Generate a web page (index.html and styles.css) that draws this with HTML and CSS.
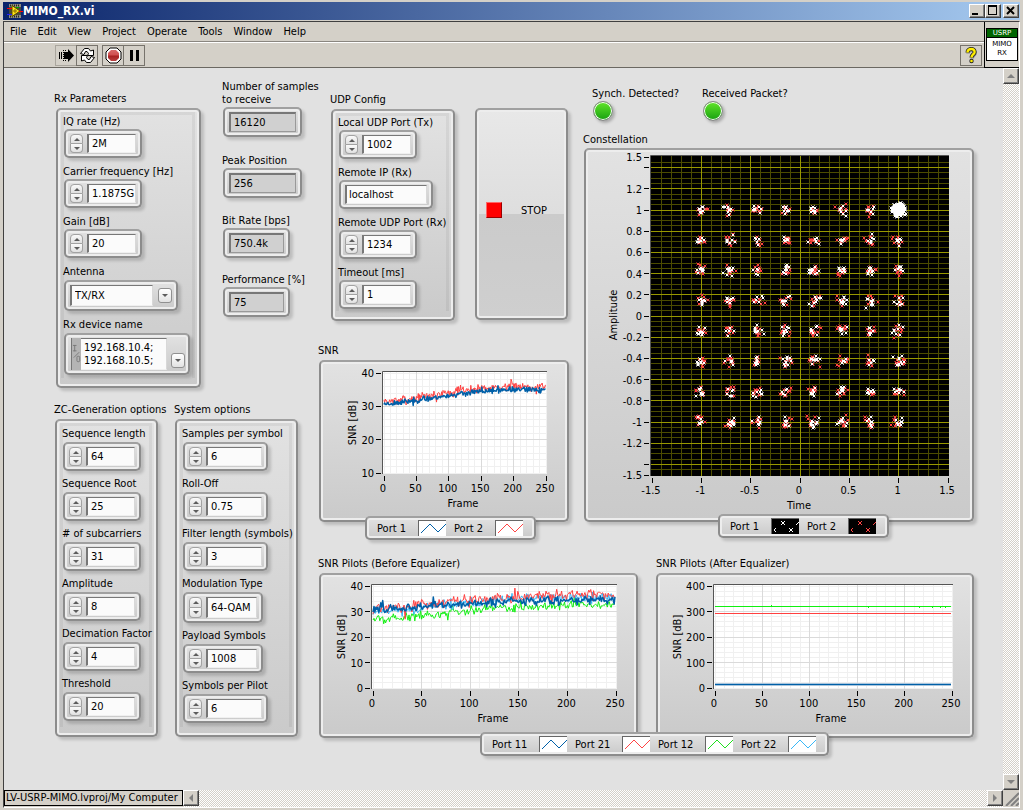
FILE: index.html
```html
<!DOCTYPE html>
<html lang="en">
<head>
<meta charset="utf-8">
<title>MIMO_RX.vi</title>
<link rel="stylesheet" href="styles.css">
</head>
<body>
<div class="window">
  <header class="titlebar">
    <svg class="app-icon" width="16" height="16" viewBox="0 0 16 16" aria-hidden="true">
      <rect x="2" y="1" width="12" height="14" fill="#8d8d80"/>
      <path d="M3 2.500h10M3 13.500h10" stroke="#26261f" stroke-width="2" stroke-dasharray="1 1"/>
      <rect x="2" y="4" width="12" height="8" fill="#4a4a3c"/>
      <path d="M5 2.500l8 5.500l-8 5.500z" fill="#ffe81a" stroke="#5a4c00"/>
      <path d="M6 8h4M8 6v4" stroke="#8a6a00"/>
      <path d="M0 5.500h5M12 8.500h4" stroke="#f00"/>
      <path d="M0 11.500h5" stroke="#22f"/>
      <path d="M9 4.500h3" stroke="#0a0"/>
    </svg>
    <h1 class="title">MIMO_RX.vi</h1>
    <div class="window-buttons">
      <button class="win-btn" aria-label="Minimize"><svg width="12" height="10" shape-rendering="crispEdges"><path d="M2 9h6" stroke="#000" stroke-width="2"/></svg></button>
      <button class="win-btn" aria-label="Maximize"><svg width="12" height="10" shape-rendering="crispEdges"><path d="M2.500 1v8.500h8v-9" fill="none" stroke="#000"/><path d="M2 1h9" stroke="#000" stroke-width="2"/></svg></button>
      <button class="win-btn close" aria-label="Close"><svg width="12" height="10"><path d="M3 2l7 7M10 2l-7 7" stroke="#000" stroke-width="2"/></svg></button>
    </div>
  </header>

  <div class="client">
    <div class="bars">
      <div class="bars-main">
        <nav class="menubar">
          <button>File</button><button>Edit</button><button>View</button><button>Project</button><button>Operate</button><button>Tools</button><button>Window</button><button>Help</button>
        </nav>
        <div class="toolbar">
          <div class="tool-set">
            <button class="tool flat" aria-label="Run"><svg width="17" height="17" viewBox="0 0 17 17"><path d="M6 5h4V2l6 6.500l-6 6.500v-3H6z" fill="#000"/><path d="M1.500 5v7M3.500 5v7" stroke="#000"/><path d="M5.500 3v11" stroke="#000" stroke-dasharray="1 1"/><path d="M7 3.500h2M7 13.500h2" stroke="#000" stroke-dasharray="1 1"/></svg></button>
            <button class="tool" aria-label="Run continuously"><svg width="17" height="17" viewBox="0 0 17 17" fill="#fff" stroke="#000"><path d="M1.500 6.500L5.500 1.500H9.500L11.500 4L14.500 3V8.500H8.500L9.500 6.500L8 4.500H6.500L5 7.500z"/><path d="M15.500 10.500L11.500 15.500H7.500L5.500 13L2.500 14V8.500H8.500L7.500 10.500L9 12.500H10.500L12 9.500z"/></svg></button>
          </div>
          <div class="tool-set">
            <button class="tool" aria-label="Abort"><svg width="17" height="17" viewBox="0 0 17 17"><defs><linearGradient id="abortFill" x1="0" y1="0" x2="0" y2="1"><stop offset="0" stop-color="#d86a6a"/><stop offset=".45" stop-color="#d05050"/><stop offset=".55" stop-color="#a82222"/><stop offset="1" stop-color="#b84040"/></linearGradient></defs><path d="M5 1h7l4 4v7l-4 4H5l-4-4V5z" fill="#fff" stroke="#000"/><path d="M6 3h5l3 3v5l-3 3H6l-3-3V6z" fill="url(#abortFill)"/></svg></button>
            <button class="tool" aria-label="Pause"><svg width="17" height="17" viewBox="0 0 17 17" fill="#000"><path d="M4 3h3v11H4zM10 3h3v11h-3z"/></svg></button>
          </div>
          <button class="tool help" aria-label="Context help"><svg width="17" height="17" viewBox="0 0 17 17" fill="none"><path d="M5 6.500c0-5 8-4.500 7 0c-.5 2-3 2-3 5" stroke="#888" stroke-width="3.500"/><path d="M4.500 5.500c0-5 8-4.500 7 0c-.5 2-3 2-3 5" stroke="#222" stroke-width="4"/><circle cx="8.500" cy="14" r="2.200" fill="#222"/><path d="M4.500 5.500c0-5 8-4.500 7 0c-.5 2-3 2-3 5" stroke="#ffee00" stroke-width="2.500"/><circle cx="8.500" cy="14" r="1.300" fill="#ffee00"/></svg></button>
        </div>
      </div>
      <div class="vi-icon-pane">
        <div class="vi-icon"><strong>USRP</strong><span>MIMO</span><span>RX</span></div>
      </div>
    </div>

    <main class="panel">
      <section class="params">
        <div class="row row-top">
          <section class="cluster">
            <h2>Rx Parameters</h2>
            <div class="group">
              <div class="item"><label for="iq">IQ rate (Hz)</label><div class="ctl"><span class="spin"><button aria-label="Increase"></button><button aria-label="Decrease"></button></span><input id="iq" value="2M"></div></div>
              <div class="item"><label for="cf">Carrier frequency [Hz]</label><div class="ctl"><span class="spin"><button aria-label="Increase"></button><button aria-label="Decrease"></button></span><input id="cf" value="1.1875G"></div></div>
              <div class="item"><label for="gain">Gain [dB]</label><div class="ctl"><span class="spin"><button aria-label="Increase"></button><button aria-label="Decrease"></button></span><input id="gain" value="20"></div></div>
              <div class="item"><label for="ant">Antenna</label><div class="ctl tall select"><select id="ant"><option>TX/RX</option></select><span class="drop"></span></div></div>
              <div class="item"><label for="dev">Rx device name</label><div class="ctl tall device"><span class="io"><svg width="10" height="22" viewBox="0 0 10 22" fill="none" stroke="#777"><path d="M1 1.500h4M3 1v7M1 7.500h4M2 15l6-6"/><rect x="5.500" y="13.500" width="3" height="6" rx="1"/></svg></span><textarea id="dev" rows="2">192.168.10.4;
192.168.10.5;</textarea><button class="drop" aria-label="Choose device"></button></div></div>
            </div>
          </section>
          <section class="readouts">
            <div class="item"><label for="ns">Number of samples<br>to receive</label><div class="ctl out"><input id="ns" readonly value="16120"></div></div>
            <div class="item"><label for="pp">Peak Position</label><div class="ctl out"><input id="pp" readonly value="256"></div></div>
            <div class="item"><label for="br">Bit Rate [bps]</label><div class="ctl out small"><input id="br" readonly value="750.4k"></div></div>
            <div class="item"><label for="pf">Performance [%]</label><div class="ctl out small"><input id="pf" readonly value="75"></div></div>
          </section>
        </div>
        <div class="row row-bottom">
          <section class="cluster">
            <h2>ZC-Generation options</h2>
            <div class="group zc">
              <div class="item"><label for="sl">Sequence length</label><div class="ctl"><span class="spin"><button aria-label="Increase"></button><button aria-label="Decrease"></button></span><input id="sl" value="64"></div></div>
              <div class="item"><label for="sr">Sequence Root</label><div class="ctl"><span class="spin"><button aria-label="Increase"></button><button aria-label="Decrease"></button></span><input id="sr" value="25"></div></div>
              <div class="item"><label for="sc"># of subcarriers</label><div class="ctl"><span class="spin"><button aria-label="Increase"></button><button aria-label="Decrease"></button></span><input id="sc" value="31"></div></div>
              <div class="item"><label for="am">Amplitude</label><div class="ctl"><span class="spin"><button aria-label="Increase"></button><button aria-label="Decrease"></button></span><input id="am" value="8"></div></div>
              <div class="item"><label for="df">Decimation Factor</label><div class="ctl"><span class="spin"><button aria-label="Increase"></button><button aria-label="Decrease"></button></span><input id="df" value="4"></div></div>
              <div class="item"><label for="th">Threshold</label><div class="ctl"><span class="spin"><button aria-label="Increase"></button><button aria-label="Decrease"></button></span><input id="th" value="20"></div></div>
            </div>
          </section>
          <section class="cluster">
            <h2>System options</h2>
            <div class="group sys">
              <div class="item"><label for="sps">Samples per symbol</label><div class="ctl wide"><span class="spin"><button aria-label="Increase"></button><button aria-label="Decrease"></button></span><input id="sps" value="6"></div></div>
              <div class="item"><label for="ro">Roll-Off</label><div class="ctl wide"><span class="spin"><button aria-label="Increase"></button><button aria-label="Decrease"></button></span><input id="ro" value="0.75"></div></div>
              <div class="item"><label for="fl">Filter length (symbols)</label><div class="ctl wide"><span class="spin"><button aria-label="Increase"></button><button aria-label="Decrease"></button></span><input id="fl" value="3"></div></div>
              <div class="item"><label for="mt">Modulation Type</label><div class="ctl ring"><span class="spin"><button aria-label="Increase"></button><button aria-label="Decrease"></button></span><input id="mt" value="64-QAM"></div></div>
              <div class="item"><label for="ps">Payload Symbols</label><div class="ctl mid"><span class="spin"><button aria-label="Increase"></button><button aria-label="Decrease"></button></span><input id="ps" value="1008"></div></div>
              <div class="item"><label for="spp">Symbols per Pilot</label><div class="ctl wide"><span class="spin"><button aria-label="Increase"></button><button aria-label="Decrease"></button></span><input id="spp" value="6"></div></div>
            </div>
          </section>
        </div>
      </section>

      <section class="displays">
        <div class="upper">
          <div class="middle">
            <div class="udp-row">
              <section class="cluster">
                <h2>UDP Config</h2>
                <div class="group udp">
                  <div class="item"><label for="lp">Local UDP Port (Tx)</label><div class="ctl"><span class="spin"><button aria-label="Increase"></button><button aria-label="Decrease"></button></span><input id="lp" value="1002"></div></div>
                  <div class="item"><label for="ip">Remote IP (Rx)</label><div class="ctl text"><input id="ip" value="localhost"></div></div>
                  <div class="item"><label for="rp">Remote UDP Port (Rx)</label><div class="ctl"><span class="spin"><button aria-label="Increase"></button><button aria-label="Decrease"></button></span><input id="rp" value="1234"></div></div>
                  <div class="item"><label for="to">Timeout [ms]</label><div class="ctl"><span class="spin"><button aria-label="Increase"></button><button aria-label="Decrease"></button></span><input id="to" value="1"></div></div>
                </div>
              </section>
              <button class="stop"><span class="stop-mark"></span>STOP</button>
            </div>
            <figure class="graph">
              <figcaption>SNR</figcaption>
              <div class="frame">
                <svg id="snr" viewBox="0 0 246 158"></svg>
                <ul class="legend snr-legend">
                  <li>Port 1<svg class="swatch" width="28" height="16"><path d="M2 12l9-9l8 8l8-8" stroke="#0060a8"/></svg></li>
                  <li>Port 2<svg class="swatch" width="28" height="16"><path d="M2 12l9-9l8 8l8-8" stroke="#f44"/></svg></li>
                </ul>
              </div>
            </figure>
          </div>
          <div class="right">
            <div class="leds">
              <div class="led-item"><span>Synch. Detected?</span><i class="led"></i></div>
              <div class="led-item"><span>Received Packet?</span><i class="led"></i></div>
            </div>
            <figure class="graph">
              <figcaption>Constellation</figcaption>
              <div class="frame">
                <svg id="constellation" viewBox="0 0 386 370"></svg>
                <ul class="legend const-legend">
                  <li>Port 1<svg class="swatch dark" width="28" height="16"><path d="M9 2l4 4m0-4l-4 4M17 9l4 4m0-4l-4 4M4 9l-2 2l2 2M24 6l3-3" stroke="#fff"/></svg></li>
                  <li>Port 2<svg class="swatch dark" width="28" height="16"><path d="M9 2l4 4m0-4l-4 4M17 9l4 4m0-4l-4 4M4 9l-2 2l2 2M24 6l3-3" stroke="#f44"/></svg></li>
                </ul>
              </div>
            </figure>
          </div>
        </div>
        <div class="pilots">
          <figure class="graph">
            <figcaption>SNR Pilots (Before Equalizer)</figcaption>
            <div class="frame"><svg id="before" viewBox="0 0 315 161"></svg></div>
          </figure>
          <figure class="graph flush">
            <figcaption>SNR Pilots (After Equalizer)</figcaption>
            <div class="frame"><svg id="after" viewBox="0 0 314 161"></svg></div>
          </figure>
          <ul class="legend pilot-legend">
            <li>Port 11<svg class="swatch" width="28" height="16"><path d="M2 12l9-9l8 8l8-8" stroke="#0060a8"/></svg></li>
            <li>Port 21<svg class="swatch" width="28" height="16"><path d="M2 12l9-9l8 8l8-8" stroke="#f44"/></svg></li>
            <li>Port 12<svg class="swatch" width="28" height="16"><path d="M2 12l9-9l8 8l8-8" stroke="#1fe01f"/></svg></li>
            <li>Port 22<svg class="swatch" width="28" height="16"><path d="M2 12l9-9l8 8l8-8" stroke="#38b8f8"/></svg></li>
          </ul>
        </div>
      </section>
    </main>

    <div class="vscroll"><button class="sb up" aria-label="Scroll up"></button><button class="sb down" aria-label="Scroll down"></button></div>
    <div class="hscroll"><span class="context">LV-USRP-MIMO.lvproj/My Computer</span><div class="htrack"><button class="sb left" aria-label="Scroll left"></button><button class="sb right-arrow" aria-label="Scroll right"></button></div></div>
    <svg class="grip" width="16" height="16" stroke="#808080" stroke-width="2"><path d="M3 16L16 3M8 16L16 8M13 16L16 13"/></svg>
  </div>
</div>
<script src="charts.js"></script>
</body>
</html>
```

FILE: styles.css
```css
* { box-sizing: border-box; }

body, button, input, select, textarea {
  font-family: "DejaVu Sans Condensed", "DejaVu Sans", "Noto Sans", sans-serif;
  font-size: 11px;
  color: #000;
}
body { margin: 0; background: #d4d0c8; }
button { padding: 0; margin: 0; }
h1, h2, figure, ul { margin: 0; padding: 0; }
h2, figcaption { font-size: 11px; font-weight: normal; line-height: 15px; white-space: nowrap; }

.window {
  display: flex;
  flex-direction: column;
  min-height: 100vh;
  padding: 2px 3px 2px 3px;
}

/* title bar */
.titlebar {
  display: flex;
  align-items: center;
  height: 18px;
  padding: 0 1px 0 4px;
  background: linear-gradient(90deg, #0a246a, #a6caf0);
}
.title { flex: 1; color: #fff; font-size: 12px; font-weight: bold; line-height: 18px; }
.window-buttons { display: flex; }
.win-btn {
  display: flex;
  width: 16px;
  height: 14px;
  background: #d4d0c8;
  border: 1px solid;
  border-color: #fff #404040 #404040 #fff;
  box-shadow: inset -1px -1px 0 #808080;
}
.win-btn.close { margin-left: 2px; }

.client {
  flex: 1;
  display: grid;
  grid-template-columns: 1fr 16px;
  grid-template-rows: auto 1fr 17px;
  margin-top: 1px;
  border: 1px solid #404040;
  border-right-color: #fff;
  border-bottom-color: #fff;
}

/* menu and tool bars */
.bars { grid-column: 1 / 3; display: flex; height: 46px; }
.bars-main { flex: 1; }
.menubar {
  display: flex;
  gap: 1px;
  height: 20px;
  padding-left: 1px;
  border-bottom: 1px solid #8a8680;
}
.menubar button { padding: 0 5px; border: 0; background: none; font-size: 11px; line-height: 19px; }
.toolbar {
  display: flex;
  gap: 5px;
  height: 26px;
  padding: 2px 2px 0 51px;
  border-top: 1px solid #fff;
  border-bottom: 1px solid #6b6862;
}
.tool-set { display: flex; }
.tool {
  display: grid;
  place-items: center;
  width: 22px;
  height: 21px;
  margin-right: -1px;
  background: #d4d0c8;
  border: 1px solid #77736c;
}
.tool.flat { border-color: #aaa69e; }
.tool.help { margin: 0 0 0 auto; }
.vi-icon-pane {
  width: 35px;
  padding: 6px 1px 0;
  border-left: 1px solid #000;
  border-bottom: 1px solid #000;
}
.vi-icon {
  display: flex;
  flex-direction: column;
  align-items: center;
  height: 33px;
  width: 32px;
  background: #fff;
  border: 1px solid #000;
  font: 7px/9px "DejaVu Sans", sans-serif;
}
.vi-icon strong {
  width: 100%;
  margin-bottom: 2px;
  background: #006400;
  border-bottom: 1px solid #000;
  color: #fff;
  font-weight: normal;
  line-height: 8px;
  text-align: center;
}

/* front panel */
.panel {
  display: flex;
  padding: 12px 29px 34px 50px;
  background: #e1e1e1;
}
.params { width: 264px; flex: none; }
.row { display: flex; align-items: flex-start; }
.row-top { gap: 21px; height: 322px; }
.row-bottom { gap: 16px; }
.row-top > .cluster { padding-top: 11px; }

.group, .frame, .ctl, .stop, .legend {
  border: 2px solid #8c8c8c;
  border-top-color: #a0a0a0;
  border-radius: 5px;
  background: linear-gradient(#e2e2e2, #cacaca);
  box-shadow: inset 0 0 0 2px #ededed, 3px 3px 3px rgba(0, 0, 0, .16);
}
.group {
  position: relative;
  display: flex;
  flex-direction: column;
  gap: 6px;
  width: 145px;
  margin: 2px 0 0 2px;
  padding: 4px 0 11px 5px;
}
.group::before {
  content: "";
  position: absolute;
  inset: 2px 4px 8px 3px;
  border: 3px solid rgba(0, 0, 0, .05);
  border-bottom: 0;
}
.row-bottom .group { gap: 5px; margin-left: 1px; padding-top: 5px; }
.row-bottom .ctl { margin-top: 1px; }
.group.zc { width: 103px; padding-bottom: 14px; }
.row-bottom .cluster:first-child { width: 104px; }
.group.sys { width: 123px; padding-bottom: 12px; }
.group.udp { width: 124px; padding-bottom: 10px; margin-left: 1px; }
.item { position: relative; }
.item label { display: block; line-height: 15px; white-space: nowrap; }

.ctl {
  display: flex;
  align-items: stretch;
  gap: 4px;
  width: 78px;
  height: 29px;
  margin-left: 1px;
  padding: 3px 4px;
}
.ctl.tall, .ctl.ring { height: 31px; }
.ctl.tall { margin-top: 1px; }
.ctl.wide { width: 85px; }
.ctl.ring, .ctl.mid { width: 80px; }
.ctl.text { width: 94px; }
.ctl.select { width: 114px; gap: 5px; align-items: center; }
.ctl.device { width: 126px; height: 42px; gap: 0; padding: 3px 3px 3px 5px; }
.ctl.out { width: 79px; height: 30px; }
.ctl.out.small { width: 67px; }

.ctl input, .ctl select, .ctl textarea {
  flex: 1;
  min-width: 0;
  width: 0;
  margin: 0;
  padding: 0 0 0 3px;
  border: 2px solid;
  border-color: #777 #d8d8d8 #f0f0f0 #777;
  border-width: 1px 1px 1px 2px;
  border-radius: 0;
  background: #fbfbfb;
  outline: 0;
}
.ctl.text input { padding-left: 2px; }
.ctl.out input { background: #d0d0d0; border-color: #777 #999 #999 #777; border-width: 2px 1px 1px 2px; }
.ctl.select select { height: 21px; appearance: none; }
.ctl.device textarea {
  border-left-width: 0;
  line-height: 13px;
  padding: 2px 2px 2px 3px;
  resize: none;
  overflow: hidden;
}
.io { display: flex; align-items: center; width: 10px; background: #b4b4b4; border-left: 1px solid #777; }

.spin { display: flex; flex-direction: column; width: 13px; }
.spin button {
  flex: 1;
  display: grid;
  place-items: center;
  border: 1px solid #a2a2a2;
  background: linear-gradient(#fafafa, #e0e0e0);
}
.spin button:first-child { border-radius: 4px 4px 0 0; }
.spin button:last-child { border-radius: 0 0 4px 4px; border-top: 0; }
.spin button::before, .drop::before {
  content: "";
  border: 3px solid transparent;
  border-top: 0;
  border-bottom: 3px solid #5c5c5c;
}
.spin button:last-child::before, .drop::before { border-top: 3px solid #5c5c5c; border-bottom: 0; }
.drop {
  display: grid;
  place-items: center;
  width: 14px;
  height: 15px;
  border: 1px solid #909090;
  border-radius: 3px;
  background: linear-gradient(#fff, #e2e2e2);
}
.device .drop { margin: 15px 0 0 4px; }

.readouts .item { height: 59px; }
.readouts .item:first-child { height: 73px; }
.readouts .item:first-child label { line-height: 13px; padding-bottom: 1px; }
.readouts .item:nth-child(2) { height: 60px; }

/* graphs */
.displays { flex: 1; min-width: 0; }
.upper { display: grid; grid-template-columns: 251fr 391fr; gap: 14px; align-items: end; }
.udp-row { display: flex; gap: 20px; padding: 12px 1px 0 12px; margin-bottom: 22px; }
.stop {
  display: flex;
  align-items: center;
  gap: 19px;
  flex: 1;
  height: 212px;
  margin-top: 16px;
  padding: 0 0 8px 9px;
  background: linear-gradient(#e8e8e8, #dedede 50%, #cbcbcb 50%, #cfcfcf);
}
.stop-mark { width: 16px; height: 16px; background: #f00; border: 1px solid; border-color: #f66 #900 #900 #f66; }
.frame { position: relative; margin: 2px 0 0 1px; }
.flush .frame { margin-left: 0; }
.right .frame { margin-top: 1px; }
.frame > svg { display: block; width: 100%; height: auto; }
.frame text { font-size: 11px; }
.leds { display: flex; gap: 24px; padding-left: 9px; margin-bottom: 11px; }
.led-item { display: flex; flex-direction: column; line-height: 15px; width: 86px; white-space: nowrap; }
.led {
  width: 20px;
  height: 20px;
  margin-left: 1px;
  border: 1px solid #888;
  border-radius: 50%;
  background: linear-gradient(#62e62a, #18a010);
  box-shadow: inset 0 0 0 1px #fff, 2px 2px 3px rgba(0, 0, 0, .25);
}
.legend {
  position: absolute;
  display: flex;
  gap: 8px;
  height: 24px;
  padding: 0 11px 0 10px;
  list-style: none;
}
.legend li { display: flex; align-items: center; justify-content: space-between; width: 69px; white-space: nowrap; }
.pilot-legend li { width: 75px; }
.snr-legend { left: 44px; bottom: -20px; }
.const-legend { left: 132px; bottom: -18px; }
.pilot-legend { left: 162px; bottom: -18px; }
.swatch { background: #fff; border: 1px solid #666; border-right: 0; border-bottom: 0; fill: none; }
.swatch.dark { background: #000; }
.pilots { position: relative; display: grid; grid-template-columns: 320fr 318fr; gap: 18px; margin-top: 34px; }

/* scroll bars */
.vscroll, .htrack {
  display: flex;
  justify-content: space-between;
  background: repeating-conic-gradient(#fff 0 25%, #d4d0c8 0 50%) 0 0 / 2px 2px;
}
.vscroll { flex-direction: column; }
.hscroll { display: flex; }
.htrack { flex: 1; }
.context { height: 16px; padding: 0 4px 0 1px; border: 1px solid #000; line-height: 14px; }
.sb {
  display: grid;
  place-items: center;
  width: 16px;
  height: 16px;
  background: #d4d0c8;
  border: 1px solid;
  border-color: #fff #404040 #404040 #fff;
  box-shadow: inset -1px -1px 0 #808080;
}
.sb::before { content: ""; border: 4px solid transparent; }
.sb.up::before { border-top: 0; border-bottom-color: #808080; }
.sb.down::before { border-bottom: 0; border-top-color: #808080; }
.sb.left::before { border-left: 0; border-right-color: #808080; }
.sb.right-arrow::before { border-right: 0; border-left-color: #808080; }
```

FILE: charts.js
```js
const NS = "http://www.w3.org/2000/svg";

function random(seed) {
  let s = seed;
  return () => {
    s = (s * 1664525 + 1013904223) % 4294967296;
    return s / 4294967296;
  };
}

function add(parent, name, attrs, text) {
  const el = document.createElementNS(NS, name);
  for (const key in attrs) el.setAttribute(key, attrs[key]);
  if (text !== undefined) el.textContent = text;
  parent.appendChild(el);
  return el;
}

function steps(from, to, by) {
  const out = [];
  for (let i = 0; from + i * by <= to + by / 1000; i++) out.push(Math.round((from + i * by) * 100) / 100);
  return out;
}

/* box: [left, top, right, bottom] of the plot; x, y: axis settings */
function drawChart(id, c) {
  const svg = document.getElementById(id);
  const [l, t, r, b] = c.box;
  const px = v => l + 1 + (v - c.x.min) / (c.x.max - c.x.min) * (r - l - 2);
  const py = v => b - 1 - (v - c.y.min) / (c.y.max - c.y.min) * (b - t - 2);
  const crisp = v => Math.floor(v) + 0.5;
  add(svg, "rect", { x: l, y: t, width: r - l, height: b - t, fill: c.back });
  const grid = (vals, horizontal, color) => {
    const d = vals.map(v => horizontal ? `M${l} ${crisp(py(v))}H${r}` : `M${crisp(px(v))} ${t}V${b}`).join("");
    add(svg, "path", { d, stroke: color, fill: "none" });
  };
  grid(c.x.minor, false, c.minorColor);
  grid(c.y.minor, true, c.minorColor);
  grid(c.x.major, false, c.majorColor);
  grid(c.y.major, true, c.majorColor);
  add(svg, "path", { d: `M${l - 0.5} ${b}V${t - 0.5}H${r}`, stroke: "#555", fill: "none" });

  const text = (x, y, s, anchor) => add(svg, "text", { x, y, "text-anchor": anchor }, s);
  c.x.ticks.forEach(v => {
    add(svg, "path", { d: `M${crisp(px(v))} ${b + 2}v5`, stroke: "#000" });
    text(px(v) - 1, b + 18, String(v), "middle");
  });
  c.y.ticks.forEach(v => {
    add(svg, "path", { d: `M${l - 7} ${crisp(py(v))}h5`, stroke: "#000" });
    if (!(c.y.unlabeled || []).includes(v)) text(l - 9, Math.round(py(v)) + 4, String(v), "end");
  });
  text(c.x.titleAt, b + 33, c.x.title, "middle");
  add(svg, "text", { "text-anchor": "middle", transform: `translate(${c.y.titleAt}) rotate(-90)` }, c.y.title);
  return { svg, px, py };
}

function trace(chart, seed, mean, noise, color, width) {
  const rnd = random(seed);
  let d = "";
  for (let i = 0; i <= 249; i++) {
    let n = rnd() + rnd() + rnd() - 1.5;
    if (rnd() > 0.95) n *= 2;
    d += (i ? "L" : "M") + chart.px(i).toFixed(1) + " " + chart.py(mean(i) + n * noise).toFixed(1);
  }
  add(chart.svg, "path", { d, stroke: color, "stroke-width": width, fill: "none", "stroke-linejoin": "round" });
}

const white = { back: "#fff", minorColor: "#f0f0f0", majorColor: "#dadada" };
const frames = (titleAt) => ({
  min: 0, max: 250, minor: steps(0, 250, 10), major: steps(50, 200, 50),
  ticks: steps(0, 250, 50), title: "Frame", titleAt
});
const ramp = (a, z) => i => a + (z - a) * Math.min(1, Math.sin(Math.min(i, 210) / 210 * Math.PI / 2) ** 1.4);

const snr = drawChart("snr", {
  ...white, box: [62, 10, 226, 112], x: frames(142),
  y: { min: 10, max: 40, minor: steps(10, 40, 2), major: [20, 30], ticks: [10, 20, 30, 40], title: "SNR [dB]", titleAt: "35 61" }
});
trace(snr, 7, ramp(31.5, 36), 1.3, "#ff4040", 1);
trace(snr, 23, ramp(30.8, 35), 0.8, "#0060a8", 1.5);

const before = drawChart("before", {
  ...white, box: [51, 10, 296, 114], x: frames(172),
  y: { min: 0, max: 40, minor: steps(0, 40, 2), major: [10, 20, 30], ticks: [0, 10, 20, 30, 40], title: "SNR [dB]", titleAt: "24 62" }
});
trace(before, 5, ramp(27.2, 32.4), 1.9, "#10f010", 1);
trace(before, 11, ramp(30, 35.5), 1.9, "#38b8f8", 1);
trace(before, 31, ramp(31.3, 36.6), 2.1, "#ff4040", 1);
trace(before, 47, ramp(31, 34.6), 1.7, "#0060a8", 1.5);

const after = drawChart("after", {
  ...white, box: [56, 10, 295, 114], x: frames(173),
  y: { min: 0, max: 400, minor: steps(0, 400, 20), major: [100, 200, 300], ticks: [0, 100, 200, 300, 400], title: "SNR [dB]", titleAt: "23 62" }
});
[["#10f010", 31.5, 1], ["#ff4040", 38.5, 1], ["#a8c4dc", 109.5, 3], ["#0060a8", 109.5, 1]].forEach(([stroke, y, w]) =>
  add(after.svg, "path", { d: `M57 ${y}H293`, stroke, "stroke-width": w }));
add(after.svg, "path", { d: "M113 30.500h1M210 32.500h1M261 32.500h1M274 32.500h1M282 32.500h1M287 32.500h1", stroke: "#10f010" });

const cons = drawChart("constellation", {
  back: "#000", minorColor: "#4c4c00", majorColor: "#989800", box: [65, 6, 363, 326],
  x: { min: -1.5, max: 1.5, minor: steps(-1.4, 1.4, 0.1), major: steps(-1, 1, 0.5), ticks: steps(-1.5, 1.5, 0.5), title: "Time", titleAt: 213 },
  y: {
    min: -1.5, max: 1.5, minor: steps(-1.45, 1.45, 0.05), major: steps(-1.4, 1.4, 0.2),
    ticks: [-1.5, ...steps(-1.4, 1.4, 0.2), 1.5], unlabeled: [-1.4, 1.4], title: "Amplitude", titleAt: "31 165"
  }
});
const rnd = random(99);
const marks = { "#ff4040": "", "#fff": "" };
function cluster(color, x, y, count, spread) {
  for (let i = 0; i < count; i++) {
    const dx = (rnd() + rnd() + rnd() - 1.5) * spread;
    const dy = (rnd() + rnd() + rnd() - 1.5) * spread;
    const cx = Math.round(cons.px(x) + dx) - 1.5;
    const cy = Math.round(cons.py(y) + dy) - 1.5;
    marks[color] += `M${cx} ${cy}l3 3m0 -3l-3 3`;
  }
}
for (let row = 0; row < 8; row++) {
  for (let col = 0; col < 8; col++) {
    const x = -1 + col * 2 / 7;
    const y = 1 - row * 2 / 7;
    cluster("#ff4040", x, y, 9, 5.5);
    cluster("#fff", x, y, 6 + Math.floor(rnd() * 6), 5);
  }
}
cluster("#fff", 1, 1, 160, 6);
for (const color of ["#ff4040", "#fff"]) {
  add(cons.svg, "path", { d: marks[color], stroke: color, "stroke-width": 1, fill: "none" });
}
```
